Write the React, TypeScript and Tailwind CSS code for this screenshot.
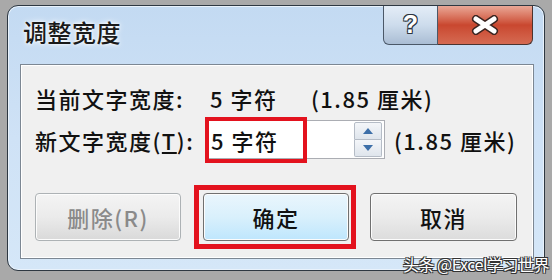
import React from "react";

const font = { fontFamily: '"Noto Sans CJK SC", "Noto Sans", sans-serif' };

function Btn({ children, className = "", textClass = "" }: { children: React.ReactNode; className?: string; textClass?: string }) {
  return (
    <div
      className={`flex items-center justify-center h-[48px] rounded-[4px] border border-[#707070] shadow-[inset_0_0_0_1px_#fcfcfc] ${className}`}
    >
      <span className={`text-[22px] leading-none tracking-[1.5px] font-medium ${textClass}`}>{children}</span>
    </div>
  );
}

export default function App() {
  return (
    <div className="w-[552px] h-[280px] bg-[#a9a9a9] pt-[5px] pl-[7px] overflow-hidden relative" style={font}>
      <div className="w-[538px] h-[266px] rounded-[11px] border border-[#2e3842] bg-gradient-to-b from-[#c3daf2] via-[#cfe2f6] to-[#d5e7f8] shadow-[inset_0_0_0_1px_#e9f2fb] flex flex-col">
        {/* title bar */}
        <div className="flex justify-between h-[58px]">
          <div className="pl-[15px] pt-[14px] text-[24px] leading-none font-medium text-[#1a1a1a] tracking-[0.5px] [text-shadow:0_0_6px_#ffffff,0_0_3px_#ffffff]">
            调整宽度
          </div>
          <div className="flex mr-[11px] h-[39px]">
            <div className="w-[55px] h-full border border-t-0 border-[#4b5868] rounded-bl-[6px] bg-gradient-to-b from-[#e4edf7] via-[#cddcec] to-[#aabdd4] flex items-center justify-center">
              <span className="text-[25px] font-bold leading-none text-white [text-shadow:0_0_1px_#2c3440,1px_1px_0_#2c3440,-1px_-1px_0_#2c3440,1px_-1px_0_#2c3440,-1px_1px_0_#2c3440] mt-[-2px]" style={{ fontFamily: '"Liberation Sans", sans-serif' }}>
                ?
              </span>
            </div>
            <div className="w-[95px] h-full border border-l-0 border-t-0 border-[#4b3430] rounded-br-[6px] bg-gradient-to-b from-[#e9a796] via-[#c9472f] to-[#d56a52] flex items-center justify-center">
              <svg width="28" height="20" viewBox="0 0 28 20">
                <path d="M5 4 L23 16 M23 4 L5 16" stroke="#3b2420" strokeWidth="8" strokeLinecap="round" />
                <path d="M5 4 L23 16 M23 4 L5 16" stroke="#ffffff" strokeWidth="5" strokeLinecap="round" />
              </svg>
            </div>
          </div>
        </div>
        {/* panel */}
        <div className="ml-[12px] w-[514px] h-[195px] border border-[#7c8793] bg-[#f0f0f0] shadow-[inset_0_0_0_1px_#ffffff] pt-[13px] text-[#111]">
          <div className="flex items-center h-[39px] text-[22px] leading-none tracking-[1.5px] font-medium">
            <span className="w-[189px] pl-[14px]">当前文字宽度:</span>
            <span className="w-[101px]">5 字符</span>
            <span>(1.85 厘米)</span>
          </div>
          <div className="flex items-center h-[45px] text-[22px] leading-none tracking-[1.5px] font-medium">
            <span className="w-[186px] pl-[14px]">新文字宽度(<span className="underline underline-offset-2">T</span>):</span>
            <div className="relative w-[178px] h-[39px] border border-[#abadb3] bg-white flex items-center justify-between">
              <span className="pl-[3px]">5 字符</span>
              <div className="flex flex-col mr-[2px] w-[28px] h-[35px]">
                <div className="flex-1 border border-[#b5bcc6] rounded-t-[2px] bg-gradient-to-b from-[#f4f6f9] to-[#dfe5ec] flex items-center justify-center">
                  <svg width="10" height="6" viewBox="0 0 10 6"><path d="M0 6 L5 0 L10 6 Z" fill="#3d6fa8" /></svg>
                </div>
                <div className="flex-1 border border-t-0 border-[#b5bcc6] rounded-b-[2px] bg-gradient-to-b from-[#f4f6f9] to-[#dfe5ec] flex items-center justify-center">
                  <svg width="10" height="6" viewBox="0 0 10 6"><path d="M0 0 L10 0 L5 6 Z" fill="#3d6fa8" /></svg>
                </div>
              </div>
              <div className="absolute left-[-3px] top-[-4px] w-[102px] h-[46px] border-[4px] border-[#e3121e]" />
            </div>
            <span className="ml-[9px]">(1.85 厘米)</span>
          </div>
          <div className="flex mt-[31px]">
            <Btn className="ml-[14px] w-[146px] bg-gradient-to-b from-[#f4f4f4] via-[#ebebeb] to-[#d9d9d9] border-[#adb2b5]" textClass="text-[#8a8a8a]">
              删除(R)
            </Btn>
            <div className="relative ml-[22px]">
              <Btn className="w-[146px] border-[#3c7fb1] bg-gradient-to-b from-[#eaf6fd] via-[#d9f0fc] to-[#bee6fd]" textClass="text-[#111]">
                确定
              </Btn>
              <div className="absolute left-[-9px] top-[-8px] w-[162px] h-[64px] border-[5px] border-[#e3121e]" />
            </div>
            <Btn className="ml-[21px] w-[147px] bg-gradient-to-b from-[#f4f4f4] via-[#ebebeb] to-[#dcdcdc]" textClass="text-[#111]">
              取消
            </Btn>
          </div>
        </div>
      </div>
      <div className="absolute left-[403px] top-[256px] text-[16px] leading-none text-white tracking-[-0.5px] [text-shadow:1px_1px_0_#333,-1px_-1px_0_#333,1px_-1px_0_#333,-1px_1px_0_#333]">
        头条 @Excel学习世界
      </div>
    </div>
  );
}
